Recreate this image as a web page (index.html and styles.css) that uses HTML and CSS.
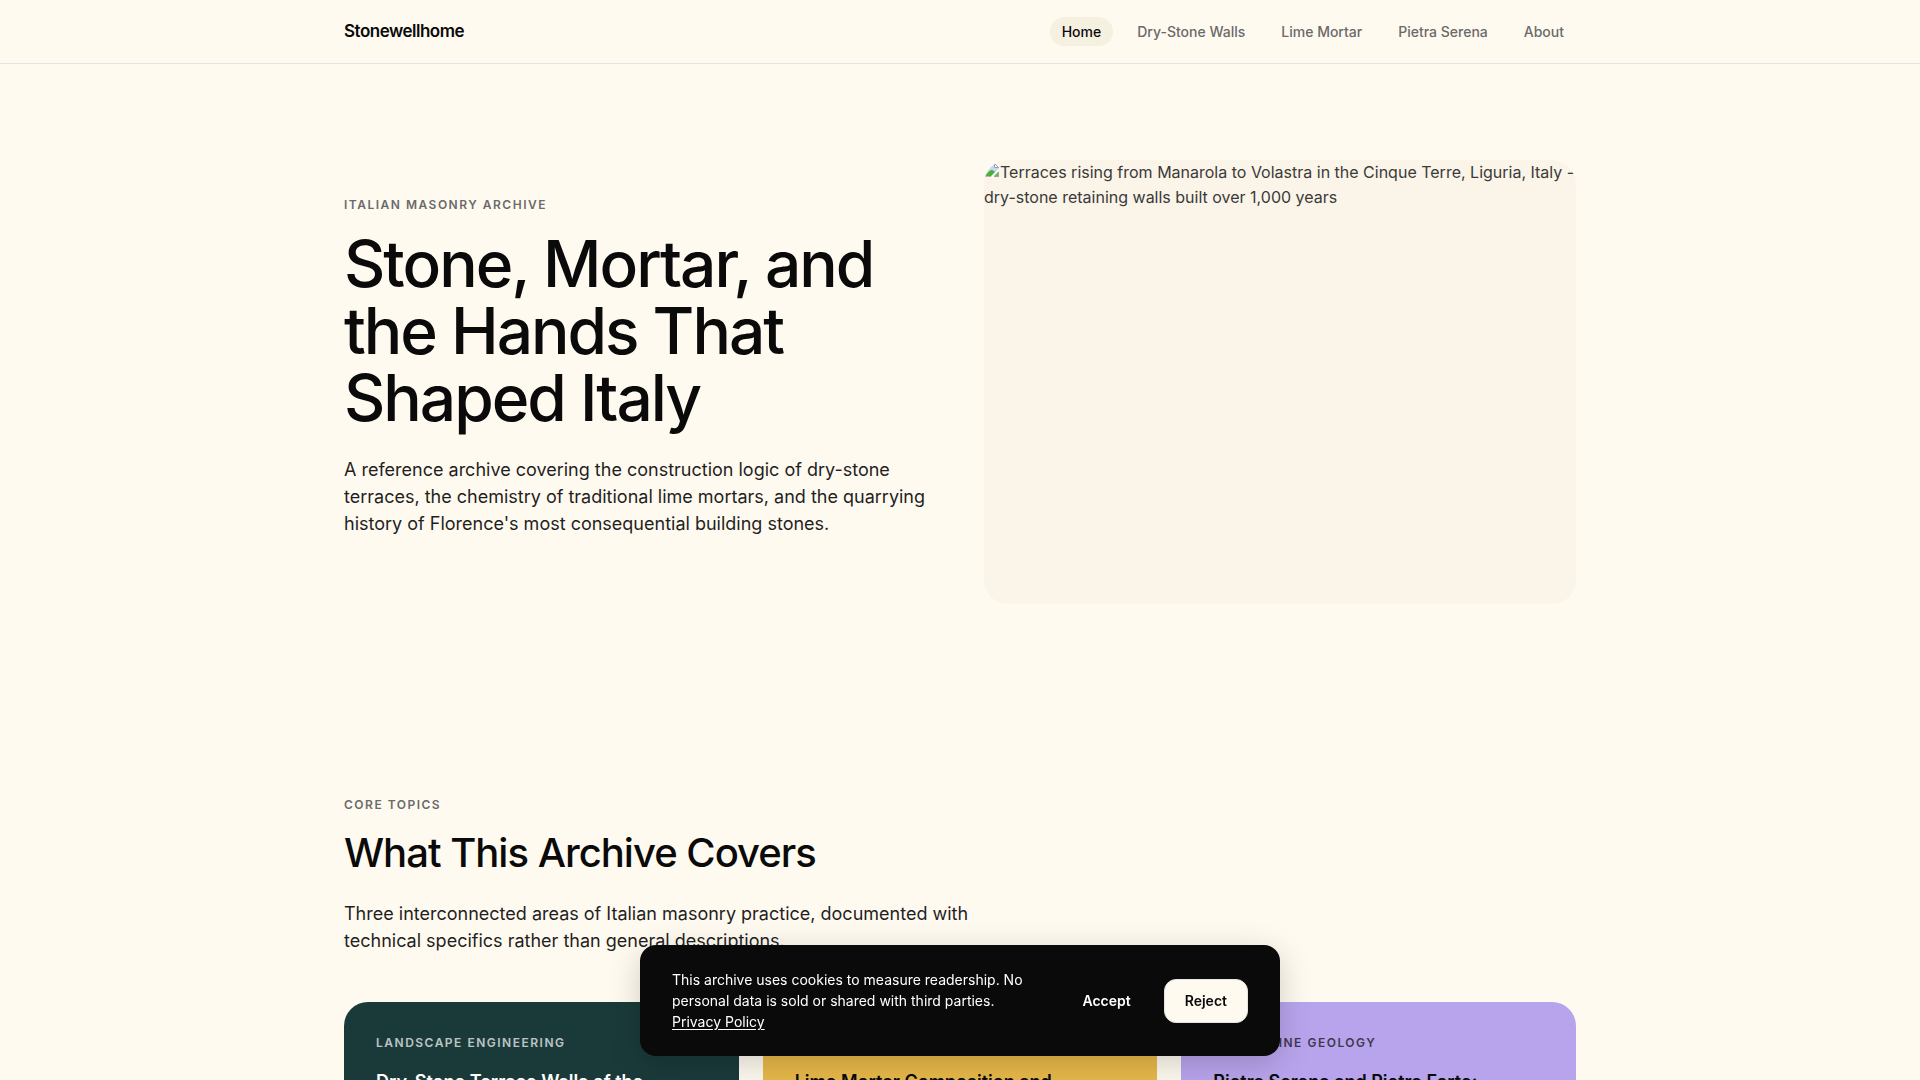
FILE: index.html
```html
<!DOCTYPE html>
<html lang="en">
<head>
<meta charset="utf-8">
<meta name="viewport" content="width=device-width, initial-scale=1">
<title>Stonewellhome</title>
<link rel="stylesheet" href="styles.css">
</head>
<body>
<header class="site-header">
  <div class="container header-inner">
    <a class="logo" href="#">Stonewellhome</a>
    <nav class="nav" aria-label="Main">
      <a class="nav-link is-active" href="#" aria-current="page">Home</a>
      <a class="nav-link" href="#">Dry-Stone Walls</a>
      <a class="nav-link" href="#">Lime Mortar</a>
      <a class="nav-link" href="#">Pietra Serena</a>
      <a class="nav-link" href="#">About</a>
    </nav>
  </div>
</header>

<main>
  <section class="section">
    <div class="container hero">
      <div class="hero-copy">
        <p class="eyebrow">Italian Masonry Archive</p>
        <h1 class="hero-title">Stone, Mortar, and the Hands That Shaped Italy</h1>
        <p class="lead">A reference archive covering the construction logic of dry-stone terraces, the chemistry of traditional lime mortars, and the quarrying history of Florence's most consequential building stones.</p>
      </div>
      <div class="hero-media"><svg class="media-icon" width="16" height="16" viewBox="0 0 16 16" aria-hidden="true">
          <path d="M1.5 1.5h9l4 4v9h-13z" fill="#c3d9f7" stroke="#b4b4b4"/>
          <path d="M10.5 1.5v4h4z" fill="#fff" stroke="#a0a0a0"/>
          <path d="M2 14v-1c2-3 4-5 6-5 1 0 2 1 3 2l-4 4z" fill="#4fae33"/>
          <path d="M6 16L15 6v3l-6 7z" fill="#fff"/>
          <path d="M10 14l4-4v4z" fill="#6dbb55"/>
          <path d="M10 14.500h4.500V10" fill="none" stroke="#a0a0a0"/>
        </svg>Terraces rising from Manarola to Volastra in the Cinque Terre, Liguria, Italy - dry-stone retaining walls built over 1,000 years</div>
    </div>
  </section>

  <section class="section">
    <div class="container">
      <p class="eyebrow">Core Topics</p>
      <h2 class="section-title">What This Archive Covers</h2>
      <p class="lead section-lead">Three interconnected areas of Italian masonry practice, documented with technical specifics rather than general descriptions.</p>
      <div class="cards">
        <article class="card card-teal">
          <p class="eyebrow card-eyebrow">Landscape Engineering</p>
          <h3 class="card-title">Dry-Stone Terrace Walls of the Mediterranean</h3>
        </article>
        <article class="card card-ochre">
          <p class="eyebrow card-eyebrow">Material Science</p>
          <h3 class="card-title">Lime Mortar Composition and Application</h3>
        </article>
        <article class="card card-lavender">
          <p class="eyebrow card-eyebrow">Florentine Geology</p>
          <h3 class="card-title">Pietra Serena and Pietra Forte: Florence's Stones</h3>
        </article>
      </div>
    </div>
  </section>
</main>

<aside class="cookie" aria-label="Cookie notice">
  <p class="cookie-text">This archive uses cookies to measure readership. No personal data is sold or shared with third parties. <a class="cookie-link" href="#">Privacy Policy</a></p>
  <div class="cookie-actions">
    <button class="btn btn-accept" type="button">Accept</button>
    <button class="btn btn-reject" type="button">Reject</button>
  </div>
</aside>
</body>
</html>
```
FILE: styles.css
```css
:root {
  --canvas: #fffaf0;
  --ink: #0a0a0a;
  --body: #1f1f1f;
  --muted: #6a6a6a;
}

* { box-sizing: border-box; margin: 0; }

body {
  background: var(--canvas);
  color: #3a3a3a;
  font: 400 16px/25px Inter, "Liberation Sans", sans-serif;
}

a { color: inherit; text-decoration: none; }

.container {
  max-width: 1280px;
  margin: 0 auto;
  padding: 0 24px;
}

.site-header {
  position: sticky;
  top: 0;
  background: var(--canvas);
  border-bottom: 1px solid #e5e5e5;
}

.header-inner {
  display: flex;
  align-items: center;
  justify-content: space-between;
  min-height: 63px;
}

.logo {
  color: var(--ink);
  font-size: 17px;
  font-weight: 600;
  letter-spacing: -0.5px;
}

.nav { display: flex; gap: 12px; }

.nav-link {
  padding: 4px 12px;
  border-radius: 999px;
  color: var(--muted);
  font-size: 14px;
  font-weight: 500;
  line-height: 21px;
}

.nav-link.is-active { background: #f5f0e0; color: var(--ink); }

.section { padding: 96px 0; }

.hero {
  display: grid;
  grid-template-columns: 1fr 1fr;
  gap: 48px;
  align-items: center;
}

.eyebrow {
  margin-bottom: 16px;
  color: var(--muted);
  font-size: 12px;
  font-weight: 600;
  line-height: 18px;
  letter-spacing: 1.5px;
  text-transform: uppercase;
}

.hero-title {
  margin-bottom: 25px;
  color: var(--ink);
  font-size: 64px;
  font-weight: 500;
  line-height: 67px;
  letter-spacing: -2px;
}

.lead { color: var(--body); font-size: 18px; line-height: 27px; }
.hero-copy .lead { margin-bottom: 32px; }

.hero-media {
  aspect-ratio: 4 / 3;
  overflow: hidden;
  border-radius: 24px;
  background: #fbf4e8;
}

.media-icon { vertical-align: baseline; }

.section-title {
  margin-bottom: 24px;
  color: var(--ink);
  font-size: 40px;
  font-weight: 500;
  line-height: 46px;
  letter-spacing: -1px;
}

.section-lead { max-width: 640px; margin-bottom: 48px; }

.cards {
  display: grid;
  grid-template-columns: repeat(3, 1fr);
  gap: 24px;
}

.card { padding: 32px; border-radius: 24px; color: var(--ink); }
.card-teal { background: #1a3a3a; color: #fff; }
.card-ochre { background: #e8b94a; }
.card-lavender { background: #b8a4ed; }

.card-eyebrow { color: inherit; opacity: 0.7; }
.card-title { font-size: 18px; font-weight: 600; line-height: 27px; }

.cookie {
  position: fixed;
  bottom: 24px;
  left: 50%;
  transform: translateX(-50%);
  display: flex;
  align-items: center;
  gap: 24px;
  width: calc(100% - 48px);
  max-width: 640px;
  padding: 24px 32px;
  border-radius: 16px;
  background: var(--ink);
  color: #fff;
  box-shadow: 0 8px 32px rgba(0, 0, 0, 0.18);
}

.cookie-text { flex: 1; font-size: 14px; line-height: 21px; }
.cookie-link { text-decoration: underline; text-underline-offset: 2px; }

.cookie-actions { display: flex; gap: 12px; }

.btn {
  min-height: 44px;
  padding: 0 20px;
  border: 1px solid transparent;
  border-radius: 12px;
  font: 600 14px/21px Inter, "Liberation Sans", sans-serif;
  cursor: pointer;
}

.btn-accept { background: var(--ink); color: #fff; }
.btn-reject { background: var(--canvas); border-color: #e5e5e5; color: var(--ink); }

@media (max-width: 800px) {
  .hero, .cards { grid-template-columns: 1fr; }
  .header-inner, .nav { flex-wrap: wrap; }
}
```
